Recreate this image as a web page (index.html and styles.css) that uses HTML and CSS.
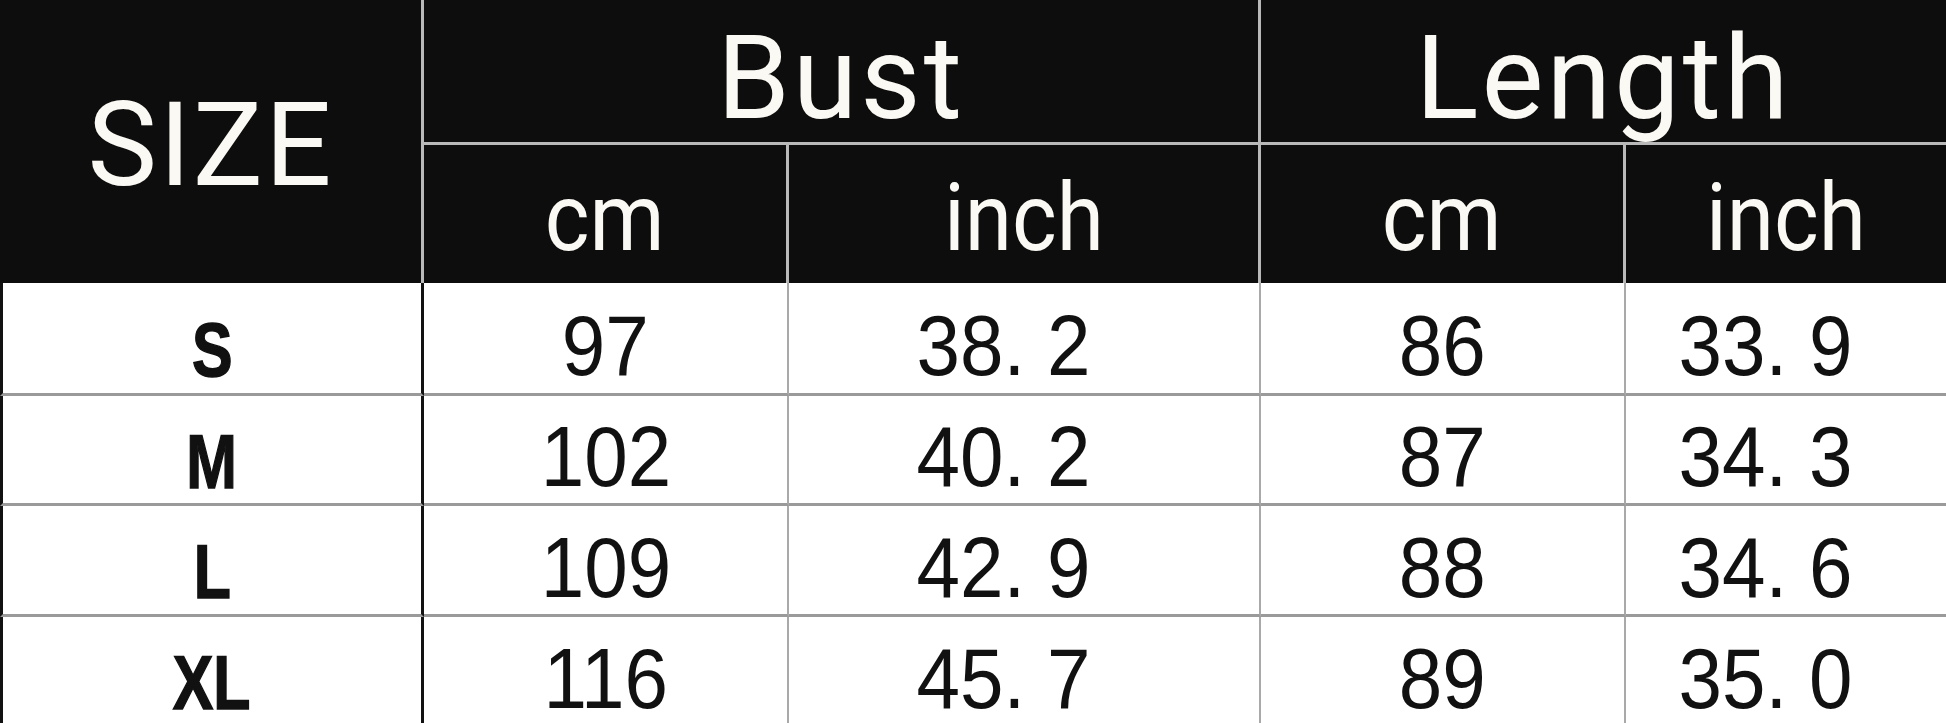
FILE: index.html
```html
<!DOCTYPE html>
<html>
<head>
<meta charset="utf-8">
<link rel="stylesheet" href="styles.css">
</head>
<body>
<div class="chart">
  <div class="h size-h"><span>SIZE</span></div>
  <div class="h group-h bust-h"><span>Bust</span></div>
  <div class="h group-h length-h"><span>Length</span></div>
  <div class="h unit-h"><span>cm</span></div>
  <div class="h unit-h"><span>inch</span></div>
  <div class="h unit-h"><span>cm</span></div>
  <div class="h unit-h last"><span>inch</span></div>

  <div class="c lab"><span>S</span></div>
  <div class="c num"><span>97</span></div>
  <div class="c num in"><span>38. 2</span></div>
  <div class="c num"><span>86</span></div>
  <div class="c num in last"><span>33. 9</span></div>

  <div class="c lab"><span>M</span></div>
  <div class="c num"><span>102</span></div>
  <div class="c num in"><span>40. 2</span></div>
  <div class="c num"><span>87</span></div>
  <div class="c num in last"><span>34. 3</span></div>

  <div class="c lab"><span>L</span></div>
  <div class="c num"><span>109</span></div>
  <div class="c num in"><span>42. 9</span></div>
  <div class="c num"><span>88</span></div>
  <div class="c num in last"><span>34. 6</span></div>

  <div class="c lab"><span>XL</span></div>
  <div class="c num"><span>116</span></div>
  <div class="c num in"><span>45. 7</span></div>
  <div class="c num"><span>89</span></div>
  <div class="c num in last"><span>35. 0</span></div>
</div>
</body>
</html>
```

FILE: styles.css
```css
html, body {
  margin: 0;
  padding: 0;
  background: #ffffff;
  overflow: hidden;
}

.chart {
  display: grid;
  grid-template-columns: 424px 365px 472px 365px 320px;
  grid-template-rows: 145px 138px 113px 110px 111px 111px;
  width: 1946px;
}

.chart > div {
  box-sizing: border-box;
  display: flex;
  justify-content: center;
  align-items: center;
}

.chart span {
  display: inline-block;
  white-space: pre;
  line-height: 1;
}

/* header */
.h {
  background: #0e0d0d;
  color: #fbf9f4;
  font-family: Roboto, "Noto Sans", sans-serif;
  border-right: 3px solid #b9b9b9;
}

.size-h {
  grid-row: 1 / span 2;
  font-size: 117px;
  letter-spacing: 2px;
  padding-top: 8px;
}

.group-h {
  font-size: 117px;
  letter-spacing: 3px;
  grid-column: span 2;
  border-bottom: 3px solid #b9b9b9;
  padding-top: 14px;
}

.unit-h {
  font-size: 95px;
  padding-top: 7px;
}

.unit-h span {
  transform: scaleX(0.9);
}

.h.last {
  border-right: none;
}

.length-h {
  border-right: none;
}

/* body */
.c {
  background: #ffffff;
  color: #111111;
  border-right: 2px solid #a9a9a9;
  border-bottom: 3px solid #9a9a9a;
}

.c.last {
  border-right: none;
}

.lab {
  border-left: 3px solid #111111;
  border-right: 3px solid #111111 !important;
  font-family: "Liberation Sans", Arial, sans-serif;
  font-weight: bold;
  font-size: 76px;
  padding-top: 24px;
}

.lab span {
  transform: scaleX(0.8);
  -webkit-text-stroke: 1.5px #111111;
}

.num {
  font-family: "Liberation Sans", Arial, sans-serif;
  font-size: 85px;
  padding-top: 14px;
}

.num span {
  transform: scaleX(0.92);
}

.num.in {
  padding-right: 40px;
}
```
